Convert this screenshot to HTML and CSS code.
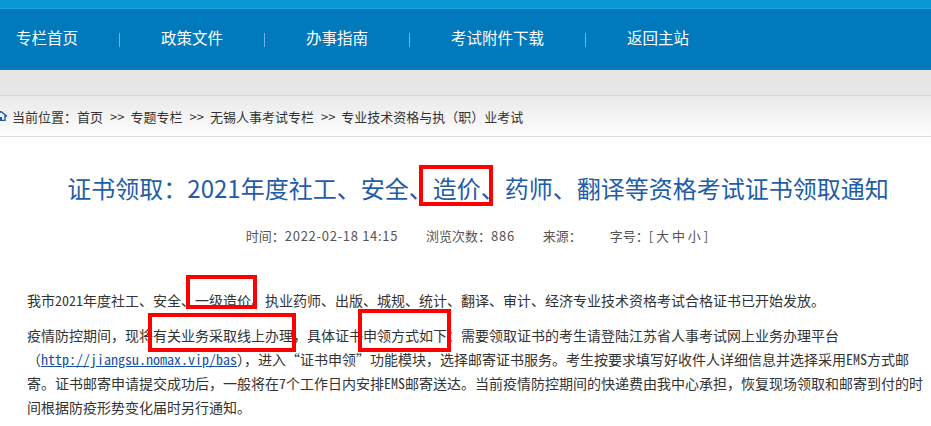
FILE: index.html
```html
<!DOCTYPE html>
<html lang="zh-CN">
<head>
  <meta charset="UTF-8">
  <title>证书领取通知</title>
  <link rel="stylesheet" href="styles.css">
</head>
<body>
  <div class="banner"></div>
  <div class="nav">
    <a href="#">专栏首页</a><span class="sep"></span>
    <a href="#">政策文件</a><span class="sep"></span>
    <a href="#">办事指南</a><span class="sep"></span>
    <a href="#">考试附件下载</a><span class="sep"></span>
    <a href="#">返回主站</a>
  </div>
  <div class="band"></div>
  <div class="crumb">
    <svg class="home" width="12" height="10" viewBox="0 0 12 10">
      <path d="M6 0.5 L11.5 5 H10 V9.5 H2 V5 H0.5 Z" fill="none" stroke="#1c5aa6" stroke-width="1.4"/>
      <rect x="5" y="6" width="2" height="3.5" fill="#1c5aa6"/>
    </svg>
    <span>当前位置：首页</span><span class="arr">&gt;&gt;</span><span>专题专栏</span><span class="arr">&gt;&gt;</span><span>无锡人事考试专栏</span><span class="arr">&gt;&gt;</span><span>专业技术资格与执（职）业考试</span>
  </div>
  <div class="article">
    <h1 class="title">证书领取：2021年度社工、安全、<span class="mark m-title">造价</span>、药师、翻译等资格考试证书领取通知</h1>
    <div class="meta">
      <span>时间：<span class="num">2022-02-18 14:15</span></span>
      <span>浏览次数：<span class="num">886</span></span>
      <span>来源：</span>
      <span class="size">字号：[ 大 中 小 ]</span>
    </div>
    <div class="content">
      <p>我市2021年度社工、安全、<span class="mark m-one">一级造价</span>、执业药师、出版、城规、统计、翻译、审计、经济专业技术资格考试合格证书已开始发放。</p>
      <p>疫情防控期间，现将<span class="mark m-two">有关业务采取线上办理</span>，具体证书<span class="mark m-three">申领方式如下</span>：需要领取证书的考生请登陆江苏省人事考试网上业务办理平台（<a href="#">http://jiangsu.nomax.vip/bas</a>），进入“证书申领”功能模块，选择邮寄证书服务。考生按要求填写好收件人详细信息并选择采用EMS方式邮寄。证书邮寄申请提交成功后，一般将在7个工作日内安排EMS邮寄送达。当前疫情防控期间的快递费由我中心承担，恢复现场领取和邮寄到付的时间根据防疫形势变化届时另行通知。</p>
    </div>
  </div>
</body>
</html>
```
FILE: styles.css
```css
body {
  margin: 0;
  font-family: "Noto Sans CJK SC", sans-serif;
  color: #333;
  background: #fff;
  overflow: hidden;
}
.banner {
  height: 8px;
  background: #0898d4;
  border-bottom: 1px solid #1aa3dc;
}
.nav {
  height: 61px;
  box-sizing: border-box;
  padding: 0 0 5px 16px;
  background: #0079bd;
  display: flex;
  align-items: center;
}
.nav a {
  color: #fff;
  font-size: 15.5px;
  text-decoration: none;
  white-space: nowrap;
}
.sep {
  width: 1px;
  height: 14px;
  margin: 5px 41px 0;
  background: #6fb2e0;
}
.band {
  height: 25px;
  background: #e6e6e6;
  border-bottom: 1px solid #d6d6d6;
}
.crumb {
  height: 40px;
  display: flex;
  align-items: center;
  font-size: 13px;
  color: #333;
  white-space: nowrap;
  background: linear-gradient(#e9e9e9, #fdfdfd);
  border-bottom: 1px solid #dedede;
}
.home {
  margin-left: -5px;
  margin-right: 5px;
}
.arr {
  margin: 0 6px 0 7px;
}
.article {
  padding: 0 8px 0 27px;
}
.title {
  margin: 33px 0 0;
  padding-left: 6px;
  font-size: 24px;
  line-height: 36px;
  font-weight: normal;
  color: #1f5da8;
  text-align: center;
  white-space: nowrap;
}
.meta {
  margin-top: 20px;
  padding-left: 4px;
  font-size: 13px;
  line-height: 20px;
  color: #555;
  text-align: center;
}
.meta > span {
  margin-right: 25px;
}
.meta .size {
  margin-right: 0;
}
.num {
  letter-spacing: 0.7px;
}
.content {
  margin-top: 42px;
  font-family: "Noto Sans Mono CJK SC", "Noto Sans CJK SC", sans-serif;
  font-size: 14px;
  line-height: 24px;
  color: #333;
}
.content p {
  margin: 0 0 11px;
}
.content a {
  color: #1a4fa3;
}
.mark {
  position: relative;
}
.mark::after {
  content: "";
  position: absolute;
  border: 4px solid #f00;
}
.m-title::after {
  top: -5px;
  bottom: -1px;
  left: -14px;
  right: -12px;
}
.m-one::after {
  top: -15px;
  bottom: 1px;
  left: -9px;
  right: -6px;
}
.m-two::after {
  top: -12px;
  bottom: -7px;
  left: -5px;
  right: -3px;
}
.m-three::after {
  top: -16px;
  bottom: -7px;
  left: -5px;
  right: -4px;
}
```
